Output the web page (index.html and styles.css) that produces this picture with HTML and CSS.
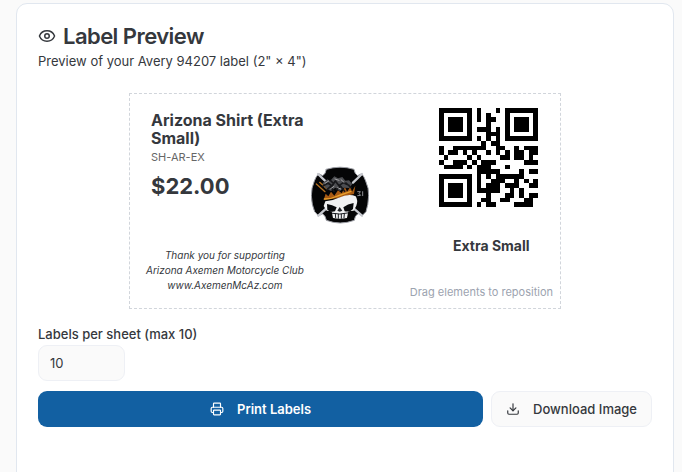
FILE: index.html
```html
<!DOCTYPE html>
<html lang="en">
<head>
<meta charset="utf-8">
<meta name="viewport" content="width=device-width, initial-scale=1">
<title>Label Preview</title>
<link rel="stylesheet" href="styles.css">
</head>
<body>
<main class="card">
  <header class="card-header">
    <h1 class="card-title">
      <svg class="title-icon" viewBox="0 0 24 24" aria-hidden="true"><path d="M2.06 12.35a1 1 0 0 1 0-.7 10.75 10.75 0 0 1 19.88 0 1 1 0 0 1 0 .7 10.75 10.75 0 0 1-19.88 0"/><circle cx="12" cy="12" r="3"/></svg>
      Label Preview
    </h1>
    <p class="card-description">Preview of your Avery 94207 label (2" × 4")</p>
  </header>

  <section class="label-canvas" aria-label="Label">
    <div class="item item-product">
      <div class="product-name">Arizona Shirt (Extra Small)</div>
      <div class="product-sku">SH-AR-EX</div>
      <div class="product-price">$22.00</div>
    </div>
    <svg class="item item-logo" viewBox="18 15 174 174" role="img" aria-label="Axemen emblem">
      <path d="M64 25Q105 12 147 25Q149 39 158 44L170 38Q178 48 182 60Q192 82 191 104Q190 132 183 152L171 164L160 158Q149 163 148 178Q105 194 64 178Q62 164 52 158L41 165L29 152Q20 132 19 104Q19 80 28 60Q32 48 41 38L53 44Q62 39 64 25Z" fill="#050506" stroke="#9b9da4" stroke-width="3"/>
      <path d="M39 39L66 65M171 39L144 65M40 164L64 142M171 164L146 142" stroke="#c6c8ce" stroke-width="7"/>
      <path d="M34 69L60 92M44 64L66 84" fill="none" stroke="#b87322" stroke-width="4"/>
      <path d="M56 116L62 98L70 106L78 92L88 104L99 88L110 97L120 78L126 92L136 78L141 92L151 74L147 99L96 112Z" fill="#a85a14"/>
      <path d="M58 114Q76 115 98 105L138 91" fill="none" stroke="#e8a02c" stroke-width="4"/>
      <path d="M52 67L67 55L75 60L88 46L99 52L112 48L121 59L132 58L142 69L133 81L116 80L105 90L91 80L78 90L62 82Z" fill="#4c4d51"/>
      <path d="M54 75L69 66L81 75L91 60L102 74L115 65L132 73M66 86L76 77L87 91M94 85L107 76L119 91M123 66L138 80M76 58L84 66" fill="none" stroke="#17181b" stroke-width="5"/>
      <path d="M60 67L71 60M90 54L102 58M108 56L117 64M77 83L87 76M98 80L107 84" stroke="#a4a4a6" stroke-width="3"/>
      <path d="M61 121Q83 119 101 110Q132 96 152 106Q160 118 154 134L146 149L130 151L126 171Q104 176 84 171L80 151L65 149L56 135Z" fill="#f1f1f2"/>
      <path d="M66 129Q82 131 95 139L90 151Q75 155 67 146ZM146 126Q128 129 115 139L119 151Q136 154 144 144Z" fill="#08090b"/>
      <path d="M104 138L97 149L104 152L112 149Z" fill="#222428"/>
      <path d="M82 157Q104 162 128 156M91 158L92 170M100 160L100 172M109 160L109 172M118 158L117 170" fill="none" stroke="#191b20" stroke-width="3"/>
      <path d="M158 92L166 92L162 98L167 103L158 104M173 92L173 104" fill="none" stroke="#8c8d92" stroke-width="3"/>
    </svg>
    <p class="item item-thanks">Thank you for supporting<br>Arizona Axemen Motorcycle Club<br>www.AxemenMcAz.com</p>
    <svg class="item item-qr" viewBox="0 0 21 21" role="img" aria-label="QR code SH-AR-EX" data-code="SH-AR-EX"></svg>
    <div class="item item-size">Extra Small</div>
    <div class="item item-hint">Drag elements to reposition</div>
  </section>

  <form class="controls">
    <label class="field-label" for="count">Labels per sheet (max 10)</label>
    <input class="field-input" id="count" type="text" inputmode="numeric" value="10">
    <div class="actions">
      <button class="button button-primary" type="button">
        <svg class="button-icon" viewBox="0 0 24 24" aria-hidden="true"><path d="M6 18H4a2 2 0 0 1-2-2v-5a2 2 0 0 1 2-2h16a2 2 0 0 1 2 2v5a2 2 0 0 1-2 2h-2"/><path d="M6 9V3a1 1 0 0 1 1-1h10a1 1 0 0 1 1 1v6"/><rect x="6" y="14" width="12" height="8" rx="1"/></svg>
        Print Labels
      </button>
      <button class="button button-outline" type="button">
        <svg class="button-icon" viewBox="0 0 24 24" aria-hidden="true"><path d="M21 15v4a2 2 0 0 1-2 2H5a2 2 0 0 1-2-2v-4"/><path d="m7 10 5 5 5-5"/><path d="M12 15V3"/></svg>
        Download Image
      </button>
    </div>
  </form>
</main>
<script src="qr.js"></script>
</body>
</html>
```
FILE: styles.css
```css
* {
  box-sizing: border-box;
}

body {
  margin: 0;
  padding: 3px 8px 0 16px;
  overflow: hidden;
  background: #fafafa;
  color: #35383d;
  font-family: Inter, "Liberation Sans", sans-serif;
  font-size: 13px;
  line-height: 18px;
}

h1,
p {
  margin: 0;
}

svg {
  fill: none;
  stroke-linecap: round;
  stroke-linejoin: round;
}

.card {
  min-height: calc(100vh + 20px);
  padding: 21px;
  background: #fff;
  border: 1px solid #e1e7ef;
  border-radius: 11px;
}

.card-title {
  display: flex;
  align-items: center;
  gap: 7px;
  font-size: 22px;
  font-weight: 600;
  line-height: 22px;
  letter-spacing: -0.025em;
}

.title-icon {
  width: 18px;
  height: 18px;
  stroke: currentColor;
  stroke-width: 2;
}

.card-description {
  margin-top: 5px;
}

.label-canvas {
  position: relative;
  width: 432px;
  max-width: 100%;
  height: 216px;
  margin: 23px auto 16px;
  border: 1px dashed #d1d5db;
}

.item {
  position: absolute;
}

.item-product {
  top: 17px;
  left: 21px;
  width: 172px;
}

.product-name {
  font-size: 16px;
  font-weight: 700;
  line-height: 18px;
}

.product-sku {
  margin-top: 2px;
  color: #666;
  font-size: 11px;
  line-height: 16px;
}

.product-price {
  margin-top: 7px;
  font-size: 22px;
  font-weight: 700;
  line-height: 28px;
}

.item-logo {
  top: 72px;
  left: 181px;
  width: 58px;
  height: 58px;
}

.item-thanks {
  top: 154px;
  left: 16px;
  font-size: 10px;
  font-style: italic;
  line-height: 15px;
  text-align: center;
  white-space: nowrap;
}

.item-qr {
  top: 14px;
  left: 309px;
  width: 99px;
  height: 99px;
}

.item-size {
  top: 143px;
  left: 323px;
  font-size: 14px;
  font-weight: 700;
}

.item-hint {
  right: 7px;
  bottom: 7px;
  color: #9ca3af;
  font-size: 11px;
}

.controls {
  display: flex;
  flex-direction: column;
  align-items: flex-start;
}

.field-label {
  font-weight: 500;
}

.field-input {
  width: 87px;
  height: 36px;
  margin-top: 2px;
  padding: 0 11px;
  background: #fafafa;
  border: 1px solid #eef0f5;
  border-radius: 9px;
  color: inherit;
  font: inherit;
}

.actions {
  display: flex;
  gap: 8px;
  width: 100%;
  margin-top: 10px;
}

.button {
  display: flex;
  align-items: center;
  justify-content: center;
  gap: 13px;
  height: 36px;
  padding: 0 14px;
  border: 1px solid transparent;
  border-radius: 9px;
  font: inherit;
  font-weight: 500;
}

.button-primary {
  flex: 1;
  background: #1260a2;
  color: #fff;
  font-weight: 600;
}

.button-outline {
  background: #fafafa;
  border-color: #eef0f5;
  color: inherit;
}

.button-icon {
  width: 14px;
  height: 14px;
  stroke: currentColor;
  stroke-width: 2;
}
```
FILE: qr.js
```js
// Version 1, level M, alphanumeric QR symbol drawn as one SVG path.
const ALPHABET = "0123456789ABCDEFGHIJKLMNOPQRSTUVWXYZ $%*+-./:";
const SIZE = 21;
const DATA_BYTES = 16;
const EC_BYTES = 10;
const FORMAT_M6 = "100111110010111";

function multiply(a, b) {
  let product = 0;
  for (; b; b >>= 1) {
    if (b & 1) product ^= a;
    a <<= 1;
    if (a & 256) a ^= 0x11d;
  }
  return product;
}

function encode(text) {
  const toBits = (value, length) => value.toString(2).padStart(length, "0");
  let bits = "0010" + toBits(text.length, 9);
  for (let i = 0; i < text.length; i += 2) {
    const first = ALPHABET.indexOf(text[i]);
    bits += i + 1 < text.length
      ? toBits(first * 45 + ALPHABET.indexOf(text[i + 1]), 11)
      : toBits(first, 6);
  }
  bits += "0000";
  while (bits.length % 8) bits += "0";
  for (let pad = 0; bits.length < DATA_BYTES * 8; pad++) {
    bits += pad % 2 ? "00010001" : "11101100";
  }
  const data = bits.match(/.{8}/g).map((byte) => parseInt(byte, 2));

  let generator = [1];
  for (let i = 0, root = 1; i < EC_BYTES; i++, root = multiply(root, 2)) {
    const next = [...generator, 0];
    generator.forEach((value, j) => { next[j + 1] ^= multiply(value, root); });
    generator = next;
  }
  const rest = [...data, ...Array(EC_BYTES).fill(0)];
  for (let i = 0; i < DATA_BYTES; i++) {
    const factor = rest[i];
    generator.forEach((value, j) => { rest[i + j] ^= multiply(value, factor); });
  }
  return [...data, ...rest.slice(DATA_BYTES)].map((byte) => toBits(byte, 8)).join("");
}

function buildMatrix(text) {
  const grid = Array.from({ length: SIZE }, () => Array(SIZE).fill(null));
  for (const [top, left] of [[0, 0], [0, 14], [14, 0]]) {
    for (let r = -1; r < 8; r++) {
      for (let c = -1; c < 8; c++) {
        if (grid[top + r] === undefined || grid[top + r][left + c] === undefined) continue;
        const ring = Math.max(Math.abs(r - 3), Math.abs(c - 3));
        grid[top + r][left + c] = ring !== 2 && ring !== 4 ? 1 : 0;
      }
    }
  }
  for (let i = 8; i < 13; i++) grid[6][i] = grid[i][6] = (i + 1) % 2;
  for (let i = 0; i < 15; i++) {
    const bit = Number(FORMAT_M6[14 - i]);
    grid[i < 6 ? i : i < 8 ? i + 1 : SIZE - 15 + i][8] = bit;
    grid[8][i < 8 ? SIZE - 1 - i : i < 9 ? 7 : 14 - i] = bit;
  }
  grid[13][8] = 1;

  const bits = encode(text);
  let index = 0;
  let upward = true;
  for (let right = SIZE - 1; right > 0; right -= 2) {
    if (right === 6) right--;
    for (let step = 0; step < SIZE; step++) {
      const r = upward ? SIZE - 1 - step : step;
      for (const c of [right, right - 1]) {
        if (grid[r][c] !== null) continue;
        const flip = (((r * c) % 2) + ((r * c) % 3)) % 2 === 0;
        grid[r][c] = Number(bits[index++]) ^ Number(flip);
      }
    }
    upward = !upward;
  }
  return grid;
}

document.querySelectorAll("[data-code]").forEach((svg) => {
  const path = document.createElementNS("http://www.w3.org/2000/svg", "path");
  let d = "";
  buildMatrix(svg.dataset.code).forEach((row, r) => {
    row.forEach((dark, c) => { if (dark) d += `M${c} ${r}h1v1h-1z`; });
  });
  path.setAttribute("d", d);
  path.setAttribute("fill", "#000");
  path.setAttribute("shape-rendering", "crispEdges");
  svg.append(path);
});
```
